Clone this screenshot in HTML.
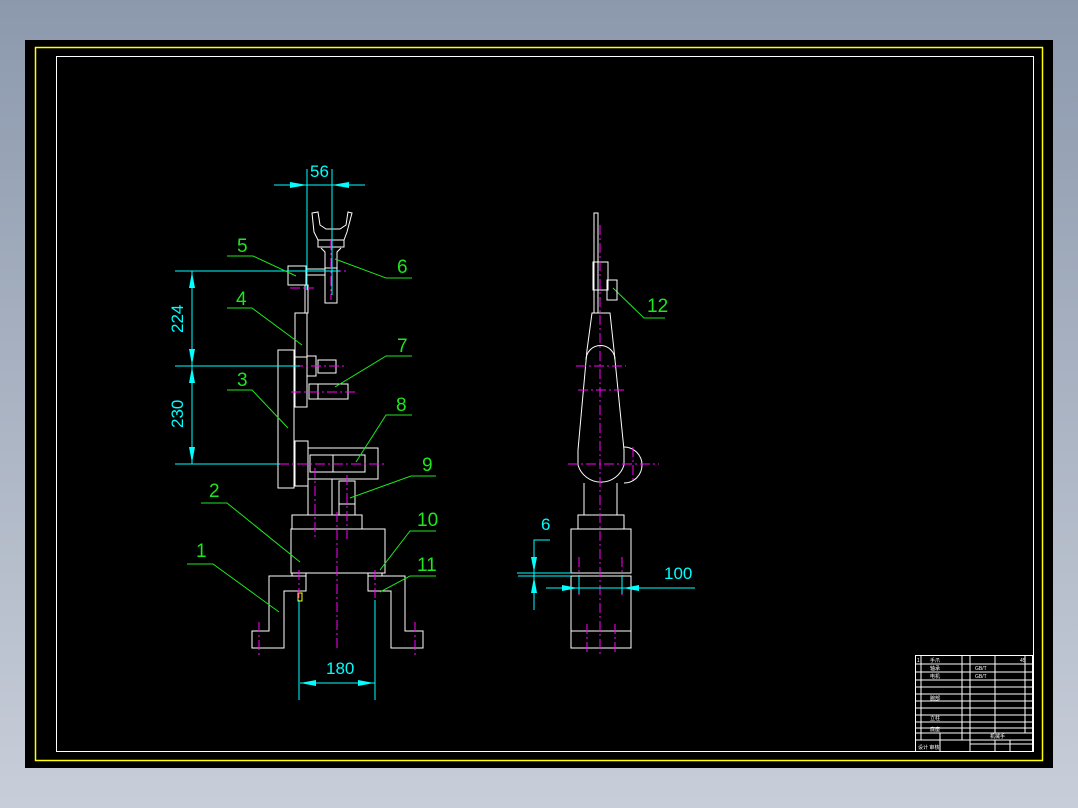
<!DOCTYPE html>
<html><head><style>
html,body{margin:0;padding:0;width:1078px;height:808px;overflow:hidden;background:linear-gradient(#8c99ad,#c8ced9);}
svg{display:block}
text{font-family:"Liberation Sans",sans-serif;}
</style></head><body>
<svg width="1078" height="808" viewBox="0 0 1078 808" xmlns="http://www.w3.org/2000/svg">
<rect x="25" y="40" width="1028" height="728" fill="#000"/>
<rect x="35.5" y="47.5" width="1007" height="713" fill="none" stroke="#ffff00" stroke-width="1.5"/>
<rect x="56.5" y="56.5" width="977" height="695" fill="none" stroke="#fff" stroke-width="1"/>

<!-- LEFT VIEW -->
<g fill="none" stroke="#fff" stroke-width="1">
<!-- gripper -->
<path d="M312,213 L318,212 L320,225 L326,229 L340,229 L346,225 L348,212 L352,213 L347,232 L344,240 L318,240 L314,232 Z"/>
<path d="M318,240 L318,247 L344,247 L344,240"/>
<path d="M321,248 L325,252 L325,303 L337,303 L337,252 L341,248"/>
<rect x="325" y="268" width="12" height="35"/>
<rect x="288" y="266" width="18" height="19"/>
<rect x="307" y="269" width="18" height="6"/>
<rect x="305" y="285" width="3" height="28"/>
<rect x="295" y="313" width="12" height="94"/>
<rect x="278" y="350" width="16" height="138"/>
<rect x="294" y="357" width="13" height="50"/>
<rect x="307" y="356" width="9" height="20"/>
<rect x="318" y="360" width="18" height="13"/>
<rect x="309" y="384" width="39" height="15"/>
<line x1="318" y1="384" x2="318" y2="399"/>
<rect x="295" y="441" width="13" height="45"/>
<rect x="308" y="448" width="70" height="31"/>
<rect x="310" y="455" width="55" height="17"/>
<line x1="333" y1="455" x2="333" y2="472"/>
<rect x="308" y="479" width="24" height="36"/>
<rect x="339" y="481" width="16" height="34"/>
<line x1="339" y1="504" x2="355" y2="504"/>
<rect x="292" y="515" width="70" height="14"/>
<rect x="291" y="529" width="94" height="44"/>
<rect x="292" y="573" width="14" height="3"/>
<rect x="368" y="573" width="14" height="3"/>
<path d="M303,576 L269,576 L269,631 L252,631 L252,648 L284,648 L284,591 L306,591 L306,576"/>
<path d="M370,576 L405,576 L405,631 L423,631 L423,648 L391,648 L391,591 L368,591 L368,576"/>
</g>
<rect x="298" y="593" width="4" height="8" fill="none" stroke="#ff0" stroke-width="1"/>
<g stroke="#f0f" stroke-width="1" stroke-dasharray="10,3,2,3" fill="none">
<line x1="290" y1="271" x2="346" y2="271"/>
<line x1="290" y1="288" x2="314" y2="288"/>
<line x1="293" y1="366" x2="347" y2="366"/>
<line x1="291" y1="392" x2="358" y2="392"/>
<line x1="279" y1="464" x2="385" y2="464"/>
<line x1="315" y1="468" x2="315" y2="540"/>
<line x1="347" y1="475" x2="347" y2="540"/>
<line x1="337" y1="512" x2="337" y2="650"/>
<line x1="299" y1="570" x2="299" y2="600"/>
<line x1="375" y1="570" x2="375" y2="600"/>
<line x1="259" y1="622" x2="259" y2="655"/>
<line x1="415" y1="622" x2="415" y2="655"/>
<line x1="331" y1="240" x2="331" y2="300"/>
</g>
<!-- dims cyan -->
<g stroke="#00ffff" stroke-width="1" fill="none">
<line x1="307" y1="169" x2="307" y2="290"/>
<line x1="332" y1="169" x2="332" y2="295"/>
<line x1="274" y1="185" x2="365" y2="185"/>
<line x1="175" y1="271" x2="340" y2="271"/>
<line x1="175" y1="366" x2="300" y2="366"/>
<line x1="175" y1="464" x2="280" y2="464"/>
<line x1="192" y1="271" x2="192" y2="464"/>
<line x1="299" y1="600" x2="299" y2="700"/>
<line x1="375" y1="600" x2="375" y2="700"/>
<line x1="300" y1="683" x2="375" y2="683"/>
</g>
<g fill="#00ffff">
<path d="M290,182 L307,185 L290,188Z"/><path d="M349,182 L332,185 L349,188Z"/>
<path d="M189,288 L192,272 L195,288Z"/><path d="M189,349 L192,365 L195,349Z"/>
<path d="M189,383 L192,367 L195,383Z"/><path d="M189,447 L192,463 L195,447Z"/>
<path d="M316,680 L300,683 L316,686Z"/><path d="M358,680 L374,683 L358,686Z"/>
</g>
<g fill="#00ffff" font-size="17">
<text x="310" y="177">56</text>
<text x="326" y="674">180</text>
<text transform="translate(183,333) rotate(-90)">224</text>
<text transform="translate(183,428) rotate(-90)">230</text>
</g>
<!-- leaders green -->
<g stroke="#1ee61e" stroke-width="1" fill="none">
<path d="M227,256 L253,256 L296,276"/>
<path d="M412,278 L386,278 L335,259"/>
<path d="M227,308 L252,308 L302,345"/>
<path d="M412,356 L386,356 L335,387"/>
<path d="M227,390 L252,390 L288,428"/>
<path d="M412,415 L386,415 L356,462"/>
<path d="M436,476 L411,476 L350,498"/>
<path d="M201,503 L227,503 L300,562"/>
<path d="M187,564 L213,564 L279,612"/>
<path d="M436,531 L410,531 L380,570"/>
<path d="M436,576 L410,576 L380,592"/>
<path d="M665,318 L644,318 L613,288"/>
</g>
<g fill="#1ee61e" font-size="19">
<text x="237" y="252">5</text><text x="397" y="273">6</text>
<text x="236" y="305">4</text><text x="397" y="352">7</text>
<text x="237" y="386">3</text><text x="396" y="411">8</text>
<text x="422" y="471">9</text><text x="209" y="497">2</text>
<text x="196" y="557">1</text><text x="417" y="526">10</text>
<text x="417" y="571">11</text><text x="647" y="312">12</text>
</g>

<!-- RIGHT VIEW -->
<g fill="none" stroke="#fff" stroke-width="1">
<rect x="594" y="213" width="4" height="100"/>
<rect x="593" y="262" width="15" height="28"/>
<rect x="607" y="280" width="10" height="20"/>
<path d="M592,313 L610,313 L614,350 L624,450 L624,465 A24,24 0 0 1 578,465 L578,450 L587,350 Z"/>
<path d="M586,360 A14,14 0 0 1 615,360"/>
<path d="M624,447 A18,18 0 0 1 624,483"/>
<line x1="584" y1="483" x2="584" y2="515"/><line x1="617" y1="483" x2="617" y2="515"/>
<rect x="578" y="515" width="46" height="14"/>
<rect x="571" y="529" width="60" height="44"/>
<rect x="571" y="576" width="60" height="72"/>
<line x1="571" y1="631" x2="631" y2="631"/>
</g>
<g stroke="#f0f" stroke-width="1" stroke-dasharray="10,3,2,3" fill="none">
<line x1="600" y1="225" x2="600" y2="655"/>
<line x1="576" y1="366" x2="626" y2="366"/>
<line x1="578" y1="390" x2="624" y2="390"/>
<line x1="568" y1="464" x2="659" y2="464"/>
<line x1="633" y1="447" x2="633" y2="480"/>
<line x1="579" y1="557" x2="579" y2="595"/>
<line x1="622" y1="557" x2="622" y2="595"/>
<line x1="587" y1="624" x2="587" y2="655"/>
<line x1="615" y1="624" x2="615" y2="655"/>
</g>
<g stroke="#00ffff" stroke-width="1" fill="none">
<path d="M550,540 L534,540 L534,610"/>
<line x1="517" y1="573" x2="571" y2="573"/>
<line x1="518" y1="576" x2="571" y2="576"/>
<line x1="546" y1="588" x2="695" y2="588"/>
<line x1="579" y1="575" x2="579" y2="594"/>
<line x1="622" y1="575" x2="622" y2="594"/>
</g>
<g fill="#00ffff">
<path d="M531,557 L534,572 L537,557Z"/><path d="M531,593 L534,577 L537,593Z"/>
<path d="M562,585 L578,588 L562,591Z"/><path d="M639,585 L623,588 L639,591Z"/>
</g>
<g fill="#00ffff" font-size="17">
<text x="541" y="530">6</text><text x="664" y="579">100</text>
</g>

<!-- title block -->
<g stroke="#fff" stroke-width="1" fill="none">
<rect x="915.5" y="655.5" width="117" height="96"/>
<line x1="921" y1="655" x2="921" y2="740"/>
<line x1="962" y1="655" x2="962" y2="740"/>
<line x1="970" y1="655" x2="970" y2="740"/>
<line x1="995" y1="655" x2="995" y2="733"/>
<line x1="1025" y1="655" x2="1025" y2="733"/>
<line x1="915" y1="664" x2="1032" y2="664"/>
<line x1="915" y1="672" x2="1032" y2="672"/>
<line x1="915" y1="680" x2="1032" y2="680"/>
<line x1="915" y1="687" x2="1032" y2="687"/>
<line x1="915" y1="694" x2="1032" y2="694"/>
<line x1="915" y1="701" x2="1032" y2="701"/>
<line x1="915" y1="708" x2="1032" y2="708"/>
<line x1="915" y1="715" x2="1032" y2="715"/>
<line x1="915" y1="722" x2="1032" y2="722"/>
<line x1="915" y1="728" x2="1032" y2="728"/>
<line x1="915" y1="733" x2="1032" y2="733"/>
<line x1="915" y1="740" x2="1032" y2="740"/>
<line x1="970" y1="744" x2="1032" y2="744"/>
<line x1="940" y1="733" x2="940" y2="751"/>
<line x1="970" y1="733" x2="970" y2="751"/>
<line x1="995" y1="740" x2="995" y2="751"/>
<line x1="1010" y1="740" x2="1010" y2="751"/>
</g>
<g fill="#fff" font-size="5">
<text x="917" y="662">1</text><text x="930" y="662">手爪</text><text x="1020" y="662">45</text>
<text x="930" y="670">轴承</text><text x="975" y="670">GB/T</text>
<text x="930" y="678">电机</text><text x="975" y="678">GB/T</text>
<text x="930" y="700">腕部</text><text x="930" y="720">立柱</text><text x="930" y="731">底座</text>
<text x="990" y="738">机械手</text><text x="918" y="749">设计 审核</text>
</g>
</svg>
</body></html>
